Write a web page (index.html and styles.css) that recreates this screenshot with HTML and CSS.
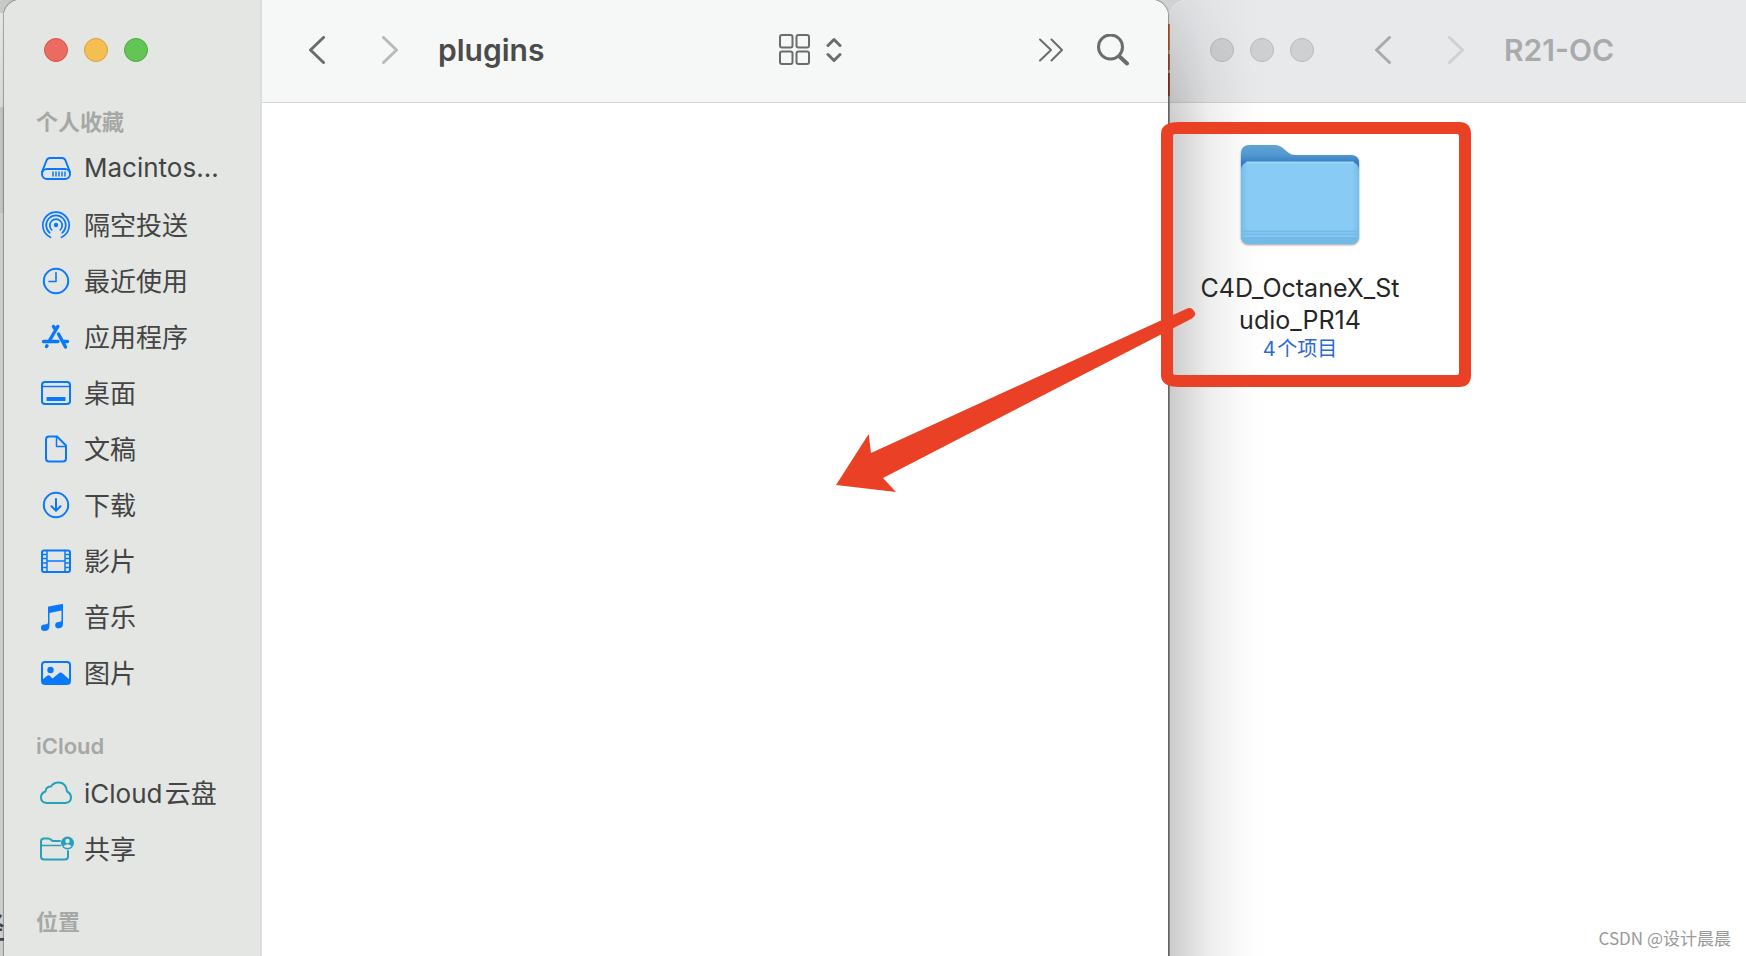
FILE: index.html
```html
<!DOCTYPE html>
<html lang="zh-CN">
<head>
    <meta charset="UTF-8">
    <meta name="viewport" content="width=device-width, initial-scale=1.0">
    <title>plugins</title>
    <link rel="stylesheet" href="styles.css">
</head>
<body>
    <div class="desktop">
        <span class="behind-text">径</span>

        <!-- Front window -->
        <section class="window front">
            <aside class="sidebar">
                <div class="lights">
                    <button class="light red" aria-label="关闭"></button>
                    <button class="light yellow" aria-label="最小化"></button>
                    <button class="light green" aria-label="缩放"></button>
                </div>

                <h2>个人收藏</h2>
                <ul>
                    <li><a href="#">
                        <svg class="icon" viewBox="0 0 32 32"><path d="M2 19 L6.500 7.500 Q7.500 5 10 5 H22 Q24.500 5 25.500 7.500 L30 19"/><rect x="2" y="16" width="28" height="10" rx="5"/><path stroke-width="1.500" d="M13 19v4M16 19v4M19 19v4M22 19v4M25 19v4"/></svg>
                        <span>Macintos...</span></a></li>
                    <li><a href="#">
                        <svg class="icon" viewBox="0 0 32 32"><circle class="solid" cx="16" cy="16" r="2.200"/><path stroke-width="1.700" d="M10.500 28.300 A13.200 13.200 0 1 1 21.500 28.300M9.800 23.800 A9.800 9.800 0 1 1 22.200 23.800M11.700 20.800 A6.200 6.200 0 1 1 20.300 20.800"/></svg>
                        <span>隔空投送</span></a></li>
                    <li><a href="#">
                        <svg class="icon" viewBox="0 0 32 32"><circle cx="16" cy="16" r="12.200"/><path stroke-width="1.600" d="M16 7.500V16.500H9"/></svg>
                        <span>最近使用</span></a></li>
                    <li><a href="#">
                        <svg class="icon" viewBox="0 0 32 32"><path stroke-width="3.400" d="M17.800 5.500 L9.500 19.500M13.500 5.500 L14.800 7.500M18.500 13 L25.500 26M3.500 20.500H18M24 20.500H27.500M6.500 25.500 L7 24.800"/></svg>
                        <span>应用程序</span></a></li>
                    <li><a href="#">
                        <svg class="icon" viewBox="0 0 32 32"><rect x="2" y="5" width="28" height="22" rx="3"/><path stroke-width="1.500" d="M2 9.500H30"/><rect class="solid" x="6.500" y="20" width="19" height="4"/></svg>
                        <span>桌面</span></a></li>
                    <li><a href="#">
                        <svg class="icon" viewBox="0 0 32 32"><path d="M17 3.500H9Q6 3.500 6 6.500V25.500Q6 28.500 9 28.500H23Q26 28.500 26 25.500V12.500Z"/><path stroke-width="1.500" d="M16.500 4V13.500H26"/></svg>
                        <span>文稿</span></a></li>
                    <li><a href="#">
                        <svg class="icon" viewBox="0 0 32 32"><circle cx="16" cy="16" r="12.200"/><path d="M16 10V21.500M11.500 17.200 L16 21.700 L20.500 17.200"/></svg>
                        <span>下载</span></a></li>
                    <li><a href="#">
                        <svg class="icon" viewBox="0 0 32 32"><rect x="2" y="5.500" width="28" height="21.500" rx="2"/><path stroke-width="1.500" d="M7 5.500V27M25 5.500V27M7 16H25M2 9.500H7M2 13.500H7M2 18H7M2 22.500H7M25 9.500H30M25 13.500H30M25 18H30M25 22.500H30"/></svg>
                        <span>影片</span></a></li>
                    <li><a href="#">
                        <svg class="icon" viewBox="0 0 32 32"><path class="solid" d="M8 6.500Q8 5.800 8.700 5.600L22 3Q23 2.800 23 3.800V22.500Q23 27.300 18.800 27.300A3.600 3.100 0 0 1 18.800 21Q21.500 20.800 21.500 19V9.500L9.500 12V24.500Q9.500 30 4.500 30A3.500 3.200 0 0 1 4.500 23.600Q8 23.300 8 21.500Z"/></svg>
                        <span>音乐</span></a></li>
                    <li><a href="#">
                        <svg class="icon" viewBox="0 0 32 32"><rect x="2" y="5" width="28" height="22" rx="3"/><circle class="solid" cx="10.500" cy="13" r="3.200"/><path class="solid" d="M2 23 L7.500 18.500Q8.500 17.800 9.500 18.600L12.500 21.500L19.500 15.800Q20.500 15 21.700 15.800L30 23V25Q30 27 27 27H5Q2 27 2 25Z"/></svg>
                        <span>图片</span></a></li>
                </ul>

                <h2>iCloud</h2>
                <ul class="cloud">
                    <li><a href="#">
                        <svg class="icon" viewBox="0 0 32 32"><path d="M6.500 26Q1 25.500 1 20.500Q1 16 5.500 14.500Q6 9.500 11 9.500Q13.500 5.500 18.500 5.500Q26 5.500 27 14.500Q31 16.500 31 20.500Q31 25.500 25.500 26Z"/></svg>
                        <span>iCloud&#8202;云盘</span></a></li>
                    <li><a href="#">
                        <svg class="icon" viewBox="0 0 32 32"><path d="M20 8H13.500Q12.300 8 11.300 7Q9.800 5.500 8 5.500H4Q1 5.500 1 8.500V23.500Q1 26.500 4 26.500H25Q28 26.500 28 23.500V18"/><path stroke-width="1.600" d="M1 12.500H20.500"/><circle class="solid" cx="27.500" cy="10" r="6.500"/><circle class="person" cx="27.500" cy="8" r="2.200"/><path class="person" d="M23.500 13.800Q24.500 11.300 27.500 11.300T31.500 13.800Q27.500 16 23.500 13.800Z"/></svg>
                        <span>共享</span></a></li>
                </ul>

                <h2>位置</h2>
            </aside>

            <div class="main">
                <header class="toolbar">
                    <button class="back" aria-label="后退"><svg width="16" height="28" viewBox="0 0 16 28"><path d="M14.500 1.500 L1.500 14 L14.500 26.500"/></svg></button>
                    <button class="forward" aria-label="前进"><svg width="16" height="28" viewBox="0 0 16 28"><path d="M1.500 1.500 L14.500 14 L1.500 26.500"/></svg></button>
                    <h1>plugins</h1>
                    <button class="view" aria-label="显示方式">
                        <svg width="31" height="31" viewBox="0 0 31 31"><g stroke-width="2"><rect x="1" y="1" width="12.500" height="12.500" rx="2"/><rect x="17.500" y="1" width="12.500" height="12.500" rx="2"/><rect x="1" y="17.500" width="12.500" height="12.500" rx="2"/><rect x="17.500" y="17.500" width="12.500" height="12.500" rx="2"/></g></svg>
                        <svg width="16" height="28" viewBox="0 0 16 28"><path stroke-width="3" d="M2 9.500 L8 3.500 L14 9.500M2 18.500 L8 24.500 L14 18.500"/></svg>
                    </button>
                    <button class="more" aria-label="更多"><svg width="24" height="24" viewBox="0 0 24 24"><path stroke-width="2" d="M1 1.500 L12 12 L1 22.500M12.500 1.500 L23 12 L12.500 22.500"/></svg></button>
                    <button class="search" aria-label="搜索"><svg width="32" height="32" viewBox="0 0 32 32"><circle cx="13.500" cy="13" r="12"/><path stroke-width="4" d="M22.500 22.500 L30 29.500"/></svg></button>
                </header>
            </div>
        </section>

        <!-- Inactive window, partly under the front one -->
        <section class="window rear">
            <header class="toolbar">
                <div class="lights">
                    <button class="light" aria-label="关闭"></button>
                    <button class="light" aria-label="最小化"></button>
                    <button class="light" aria-label="缩放"></button>
                </div>
                <button class="back" aria-label="后退"><svg width="16" height="28" viewBox="0 0 16 28"><path d="M14.500 1.500 L1.500 14 L14.500 26.500"/></svg></button>
                <button class="forward" aria-label="前进"><svg width="16" height="28" viewBox="0 0 16 28"><path d="M1.500 1.500 L14.500 14 L1.500 26.500"/></svg></button>
                <h1>R21-OC</h1>
            </header>
            <div class="files">
                <figure class="file">
                    <svg class="folder" width="118" height="100" viewBox="0 0 118 100">
                        <defs>
                            <linearGradient id="tab" x1="0" y1="0" x2="0" y2="1">
                                <stop offset="0" stop-color="#5fa2d4"/>
                                <stop offset="0.160" stop-color="#5399cf"/>
                                <stop offset="0.320" stop-color="#2f78c4"/>
                            </linearGradient>
                            <linearGradient id="face" x1="0" y1="0" x2="1" y2="0">
                                <stop offset="0" stop-color="#76bdea"/>
                                <stop offset="0.060" stop-color="#88ccf6"/>
                                <stop offset="0.940" stop-color="#88ccf6"/>
                                <stop offset="1" stop-color="#76bdea"/>
                            </linearGradient>
                        </defs>
                        <path fill="url(#tab)" d="M0 9Q0 0 9 0H34Q38 0 41 2.500L47 7.500Q50 10 54 10H110Q118 10 118 18V60H0Z"/>
                        <rect fill="url(#face)" y="17" width="118" height="82" rx="8"/>
                        <path fill="#71bae8" d="M0 92H118Q117 99 110 99H8Q1 99 0 92Z"/>
                        <path fill="none" stroke="#76bbe6" d="M0 86.500H118M0 89.500H118"/>
                        <path fill="none" stroke="#9bd6fa" d="M6 17.500H112"/>
                    </svg>
                    <figcaption>
                        <span class="name">C4D_OctaneX_St<br>udio_PR14</span>
                        <span class="count">4&#8202;个项目</span>
                    </figcaption>
                    <!-- Red frame round the folder and the arrow to the plugins window -->
                    <svg class="callout" width="640" height="380" viewBox="0 0 640 380">
                        <path fill-rule="evenodd" d="M343 12H623Q635 12 635 24V265Q635 277 623 277H343Q325 277 325 265V24Q325 12 343 12ZM339 24Q337 24 337 26V263Q337 265 339 265H621Q623 265 623 263V26Q623 24 621 24Z"/>
                        <path d="M0 375 L32.700 324 L35 343 L350 199Q356 196 359 203Q360 206 356 208.500 L47 368 L60 382Z"/>
                    </svg>
                </figure>
            </div>
            <p class="watermark">CSDN @设计晨晨</p>
        </section>
    </div>
</body>
</html>
```
FILE: styles.css
```css
* {
    box-sizing: border-box;
}

body {
    margin: 0;
    font-family: "Inter", "Noto Sans CJK SC", sans-serif;
    color: #434443;
}

h1, h2, ul, p, figure {
    margin: 0;
    padding: 0;
}

button {
    padding: 0;
    border: none;
    background: none;
    cursor: pointer;
}

svg {
    display: block;
    fill: none;
    stroke: currentColor;
    stroke-width: 2;
    stroke-linecap: round;
    stroke-linejoin: round;
}

/* What shows between and behind the windows */
.desktop {
    position: relative;
    display: grid;
    grid-template-columns: 97fr 48fr;
    gap: 2px;
    height: 100vh;
    padding-left: 4px;
    overflow: hidden;
    background:
        linear-gradient(#d2d2d2 24px, #bd6441 24px 50px, #a7a083 50px 54px, #a1553b 54px 70px, #a7a083 70px 73px, #8f402b 73px 96px, #888 96px) 67% 0 / 30px 100% no-repeat,
        linear-gradient(#c8c9c9 13px, #e6e6e6 13px, #d8d8d8 107px, #c2c2c2 107px 213px, #cecece 213px);
}

.behind-text {
    position: absolute;
    left: -25px;
    bottom: 9px;
    font-size: 30px;
    font-weight: 500;
    line-height: 40px;
}

.window {
    position: relative;
    min-width: 0;
    border-radius: 16px 16px 0 0;
}

.front {
    display: flex;
    background: #fff;
    box-shadow: 0 0 1px 1px rgba(0, 0, 0, 0.3);
}

/* Sidebar */
.sidebar {
    flex: 0 0 258px;
    overflow: hidden;
    border-right: 2px solid #dcdedc;
    border-radius: 16px 0 0 0;
    background: #e4e6e3;
}

.lights {
    display: flex;
    gap: 16px;
}

.sidebar .lights {
    height: 103px;
    padding: 38px 40px 0;
}

.light {
    width: 24px;
    height: 24px;
    border: 1px solid #b9babc;
    border-radius: 50%;
    background: #cfd0d2;
}

.red {
    border-color: #d65549;
    background: #ec6b60;
}

.yellow {
    border-color: #d9a13d;
    background: #f4bf50;
}

.green {
    border-color: #4cab40;
    background: #62c556;
}

.sidebar h2 {
    padding-left: 32px;
    font-size: 22px;
    font-weight: 600;
    line-height: 38px;
    color: #a6a8a5;
}

.sidebar ul {
    margin-bottom: 26px;
    list-style: none;
}

.sidebar a {
    display: flex;
    align-items: center;
    gap: 12px;
    height: 56px;
    padding-left: 36px;
    font-size: 26px;
    color: inherit;
    text-decoration: none;
    white-space: nowrap;
}

.sidebar a span {
    padding-bottom: 3px;
}

.icon {
    width: 32px;
    height: 32px;
    overflow: visible;
    color: #0a78fb;
}

.cloud .icon {
    color: #27a1b9;
}

.solid {
    fill: currentColor;
    stroke: none;
}

.person {
    fill: #e4e6e3;
    stroke: none;
}

/* Toolbars */
.main {
    flex: 1;
    min-width: 0;
}

.toolbar {
    display: flex;
    align-items: center;
    height: 103px;
    padding: 0 39px 3px 47px;
    border-bottom: 1px solid #d5d6d6;
    border-radius: 0 16px 0 0;
    background: #f6f8f7;
}

.toolbar button {
    color: #6b6c6b;
}

.toolbar .back svg,
.toolbar .forward svg,
.search svg {
    stroke-width: 3;
}

.toolbar .forward {
    margin: 0 40px 0 57px;
    color: #b9bab9;
}

.toolbar h1 {
    font-size: 30px;
    font-weight: 600;
    line-height: 40px;
    color: #4a4b4a;
    white-space: nowrap;
}

.toolbar .view {
    display: flex;
    align-items: center;
    gap: 16px;
    margin-left: auto;
    margin-right: 197px;
}

.toolbar .more {
    margin-right: 34px;
}

/* Inactive window */
.rear {
    display: flex;
    flex-direction: column;
    background: #fff;
}

/* Shadow that the front window throws */
.rear::before {
    content: "";
    position: absolute;
    inset: 0 auto 0 0;
    width: 96px;
    border-radius: 16px 0 0 0;
    background: linear-gradient(to right, rgba(0, 0, 0, 0.2), rgba(0, 0, 0, 0.07) 40%, rgba(0, 0, 0, 0.01) 80%, transparent);
    -webkit-mask-image: linear-gradient(rgba(0, 0, 0, 0.3), #000 120px);
    mask-image: linear-gradient(rgba(0, 0, 0, 0.3), #000 120px);
}

.rear .toolbar {
    padding-left: 40px;
    border-radius: 16px 0 0 0;
    background: #e8e9eb;
}

.rear .back {
    margin-left: 61px;
    color: #a9aaac;
}

.rear .forward {
    color: #cfd0d2;
}

.rear h1 {
    color: #a9aaac;
}

.files {
    flex: 1;
    padding: 42px 25px;
}

.file {
    position: relative;
    display: flex;
    flex-direction: column;
    align-items: center;
    gap: 27px;
    width: 210px;
    text-align: center;
}

.folder {
    stroke: none;
    filter: drop-shadow(0 1px 1px rgba(0, 0, 0, 0.4));
}

.name {
    display: block;
    font-size: 25px;
    line-height: 32px;
    color: #262626;
}

.count {
    display: block;
    font-size: 20px;
    line-height: 26px;
    color: #2c68d6;
}

.callout {
    position: absolute;
    top: -35px;
    right: -71px;
    overflow: visible;
    fill: #ea4126;
    stroke: none;
    pointer-events: none;
}

.watermark {
    padding: 0 15px 6px;
    font-family: "Noto Sans CJK SC", sans-serif;
    font-size: 17px;
    line-height: 24px;
    text-align: right;
    color: #999;
}
```
